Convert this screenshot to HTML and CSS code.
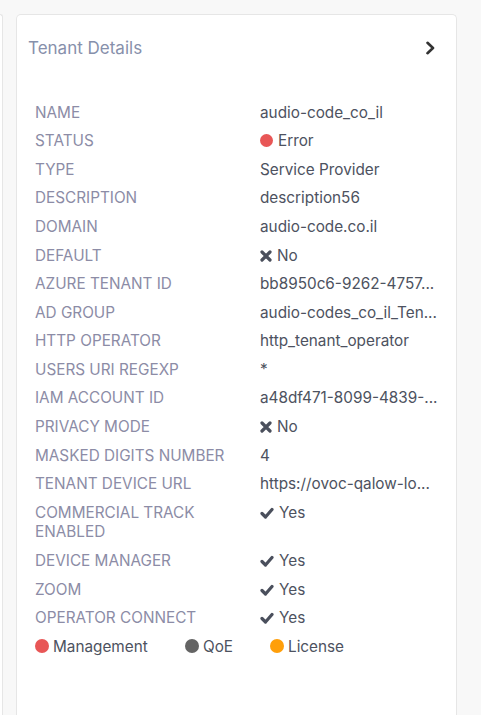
FILE: index.html
```html
<!DOCTYPE html>
<html>
<head>
<meta charset="utf-8">
<link rel="stylesheet" href="styles.css">
</head>
<body>
<div class="page">
  <div class="side"><span class="side-mark"></span></div>
  <div class="card">
    <div class="card-head">
      <span class="title">Tenant Details</span>
      <svg class="chev" width="11" height="14" viewBox="0 0 11 14"><polyline points="2.5,1.8 8,7 2.5,12.2" fill="none" stroke="#333" stroke-width="2.6" stroke-linecap="round" stroke-linejoin="round"/></svg>
    </div>
    <div class="card-body">
      <div class="row"><div class="lbl">NAME</div><div class="val">audio-code_co_il</div></div>
      <div class="row"><div class="lbl">STATUS</div><div class="val"><span class="dot red"></span>Error</div></div>
      <div class="row"><div class="lbl">TYPE</div><div class="val">Service Provider</div></div>
      <div class="row"><div class="lbl">DESCRIPTION</div><div class="val">description56</div></div>
      <div class="row"><div class="lbl">DOMAIN</div><div class="val">audio-code.co.il</div></div>
      <div class="row"><div class="lbl">DEFAULT</div><div class="val"><svg class="ico x" width="12" height="12" viewBox="0 0 12 12"><path d="M2 2L10 10M10 2L2 10" stroke="#4a4f5c" stroke-width="3.2" stroke-linecap="round"/></svg>No</div></div>
      <div class="row"><div class="lbl">AZURE TENANT ID</div><div class="val">bb8950c6-9262-4757...</div></div>
      <div class="row"><div class="lbl">AD GROUP</div><div class="val">audio-codes_co_il_Ten...</div></div>
      <div class="row"><div class="lbl">HTTP OPERATOR</div><div class="val">http_tenant_operator</div></div>
      <div class="row"><div class="lbl">USERS URI REGEXP</div><div class="val">*</div></div>
      <div class="row"><div class="lbl">IAM ACCOUNT ID</div><div class="val">a48df471-8099-4839-...</div></div>
      <div class="row"><div class="lbl">PRIVACY MODE</div><div class="val"><svg class="ico x" width="12" height="12" viewBox="0 0 12 12"><path d="M2 2L10 10M10 2L2 10" stroke="#4a4f5c" stroke-width="3.2" stroke-linecap="round"/></svg>No</div></div>
      <div class="row"><div class="lbl">MASKED DIGITS NUMBER</div><div class="val">4</div></div>
      <div class="row"><div class="lbl">TENANT DEVICE URL</div><div class="val">https://ovoc-qalow-lo...</div></div>
      <div class="row"><div class="lbl">COMMERCIAL TRACK ENABLED</div><div class="val"><svg class="ico ck" width="14" height="12" viewBox="0 0 14 12"><polyline points="2,6.5 5.5,10 12,2.5" fill="none" stroke="#4a4f5c" stroke-width="3.2" stroke-linecap="round" stroke-linejoin="round"/></svg>Yes</div></div>
      <div class="row"><div class="lbl">DEVICE MANAGER</div><div class="val"><svg class="ico ck" width="14" height="12" viewBox="0 0 14 12"><polyline points="2,6.5 5.5,10 12,2.5" fill="none" stroke="#4a4f5c" stroke-width="3.2" stroke-linecap="round" stroke-linejoin="round"/></svg>Yes</div></div>
      <div class="row"><div class="lbl">ZOOM</div><div class="val"><svg class="ico ck" width="14" height="12" viewBox="0 0 14 12"><polyline points="2,6.5 5.5,10 12,2.5" fill="none" stroke="#4a4f5c" stroke-width="3.2" stroke-linecap="round" stroke-linejoin="round"/></svg>Yes</div></div>
      <div class="row"><div class="lbl">OPERATOR CONNECT</div><div class="val"><svg class="ico ck" width="14" height="12" viewBox="0 0 14 12"><polyline points="2,6.5 5.5,10 12,2.5" fill="none" stroke="#4a4f5c" stroke-width="3.2" stroke-linecap="round" stroke-linejoin="round"/></svg>Yes</div></div>
      <div class="legend">
        <span class="leg leg1"><span class="dot red"></span>Management</span>
        <span class="leg leg2"><span class="dot gray"></span>QoE</span>
        <span class="leg"><span class="dot orange"></span>License</span>
      </div>
    </div>
  </div>
</div>
</body>
</html>
```
FILE: styles.css
```css
html, body {
  margin: 0;
  padding: 0;
  height: 100%;
  background: #f8f8f8;
  font-family: Inter, "Noto Sans", "Liberation Sans", sans-serif;
}
.page {
  display: flex;
  align-items: stretch;
  height: 715px;
  overflow: hidden;
  padding-top: 14px;
  box-sizing: border-box;
}
.side {
  position: relative;
  width: 2px;
  flex: none;
  background: #ffffff;
  border: 1px solid #e6e6e6;
  border-left: none;
  border-bottom: none;
  border-top-right-radius: 4px;
}
.side-mark {
  position: absolute;
  left: -2px;
  top: 26px;
  width: 2px;
  height: 4px;
  background: #9aa0b0;
}
.card {
  margin-left: 13px;
  width: 441px;
  flex: none;
  box-sizing: border-box;
  background: #ffffff;
  border: 1px solid #e6e6e6;
  border-bottom: none;
  border-radius: 5px 5px 0 0;
}
.card-head {
  display: flex;
  align-items: center;
  justify-content: space-between;
  padding: 23px 20px 20px 11px;
  height: 20px;
}
.title {
  font-size: 17px;
  line-height: 20px;
  color: #8790ab;
}
.chev {
  display: block;
}
.card-body {
  padding: 20px 15px 0 18px;
}
.row {
  display: grid;
  grid-template-columns: 225px minmax(0, 1fr);
  padding: 4.55px 0;
  font-size: 15.3px;
  line-height: 19.5px;
}
.lbl {
  color: #8c8ca6;
  padding-right: 30px;
}
.val {
  display: block;
  color: #4d5260;
  white-space: nowrap;
  height: 19.5px;
}
.dot {
  display: inline-block;
  width: 13px;
  height: 13px;
  border-radius: 50%;
  margin-right: 5px;
  vertical-align: -1px;
}
.red { background: #e85656; }
.gray { background: #646464; }
.orange { background: #ff9f0a; }
.ico {
  display: inline-block;
  vertical-align: -1px;
  margin-right: 5px;
}
.legend {
  display: flex;
  padding: 4.55px 0;
  font-size: 15.3px;
  line-height: 19.5px;
  color: #4d5260;
}
.leg {
  display: inline-flex;
  align-items: center;
}
.leg .dot {
  width: 14px;
  height: 14px;
  margin-right: 4px;
}
.leg1 { width: 150px; }
.leg2 { width: 85px; }
```
